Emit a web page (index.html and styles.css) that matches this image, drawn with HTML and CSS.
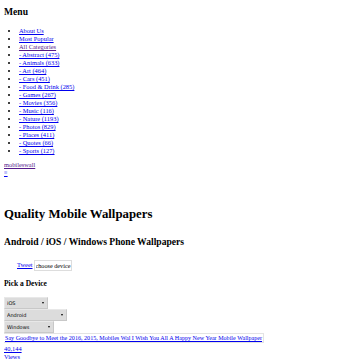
FILE: index.html
```html
<!DOCTYPE html>
<html lang="en">
<head>
<meta charset="UTF-8">
<meta name="viewport" content="width=device-width, initial-scale=1.0">
<title>mobileswall</title>
<link rel="stylesheet" href="styles.css">
</head>
<body>
<div class="menu">
  <h2 class="menu-title">Menu</h2>
  <ul class="menu-list">
    <li><a href="#">About Us</a></li>
    <li><a href="#">Most Popular</a></li>
    <li><a href="#" class="visited">All Categories</a></li>
    <li><a href="#">- Abstract (475)</a></li>
    <li><a href="#">- Animals (633)</a></li>
    <li><a href="#">- Art (464)</a></li>
    <li><a href="#">- Cars (451)</a></li>
    <li><a href="#">- Food &amp; Drink (285)</a></li>
    <li><a href="#">- Games (267)</a></li>
    <li><a href="#">- Movies (356)</a></li>
    <li><a href="#">- Music (116)</a></li>
    <li><a href="#">- Nature (1193)</a></li>
    <li><a href="#">- Photos (829)</a></li>
    <li><a href="#">- Places (411)</a></li>
    <li><a href="#">- Quotes (66)</a></li>
    <li><a href="#">- Sports (127)</a></li>
  </ul>
</div>

<div class="header">
  <a href="#" class="logo visited">mobileswall</a>
  <a href="#" class="menu-toggle">&equiv;</a>
</div>

<h1 class="page-title">Quality Mobile Wallpapers</h1>
<h2 class="page-subtitle">Android / iOS / Windows Phone Wallpapers</h2>

<div class="share">
  <a href="#">Tweet</a><input type="text" class="device-input" value="choose device">
</div>

<h3 class="pick-title">Pick a Device</h3>
<div class="devices">
  <label class="device-select ios"><select><option>iOS</option></select></label>
  <label class="device-select android"><select><option>Android</option></select></label>
  <label class="device-select windows"><select><option>Windows</option></select></label>
</div>

<a href="#" class="wall-link">Say Goodbye to Meet the 2016, 2015, Mobiles Wal I Wish You All A Happy New Year Mobile Wallpaper</a>
<a href="#" class="views">40,144<br>Views</a>
</body>
</html>
```

FILE: styles.css
```css
body {
  margin: 0 4px;
  font-family: "Liberation Serif", serif;
  font-size: 6.4px;
  line-height: 8px;
  color: #000;
}

a {
  color: #0000ee;
}

a.visited {
  color: #551a8b;
}

.menu-title {
  font-size: 9.6px;
  line-height: 11px;
  margin: 6px 0 0;
}

.menu-list {
  margin: 10px 0 0;
  padding-left: 15px;
}

.menu-list li::marker {
  font-size: 8px;
}

.header {
  margin-top: 6px;
  display: flex;
  flex-direction: column;
  align-items: flex-start;
}

.page-title {
  font-size: 12.8px;
  line-height: 15px;
  margin: 30px 0 0;
}

.page-subtitle {
  font-size: 9.6px;
  line-height: 11px;
  margin: 14px 0 0;
}

.share {
  margin-top: 12px;
  padding-left: 13px;
  display: flex;
  align-items: center;
  height: 12px;
}

.device-input {
  font-family: "Liberation Serif", serif;
  font-size: 6.2px;
  width: 38px;
  height: 11px;
  padding: 0 0 0 1px;
  margin: 0 0 0 1px;
  border: 1px solid #ddd;
  box-sizing: border-box;
  color: #000;
}

.pick-title {
  font-size: 7.5px;
  line-height: 9px;
  margin: 8px 0 0;
}

.devices {
  margin-top: 9px;
  display: flex;
  flex-direction: column;
  align-items: flex-start;
}

.device-select {
  position: relative;
  display: block;
  height: 12px;
}

.device-select select {
  appearance: none;
  width: 100%;
  height: 12px;
  margin: 0;
  padding: 0 0 0 2px;
  font-family: "DejaVu Sans", sans-serif;
  font-size: 5px;
  border: 1px solid #e8e8e8;
  border-right-color: #c8c8c8;
  border-bottom-color: #c8c8c8;
  border-radius: 0;
  background-color: #dcdcdc;
  color: #000;
  box-sizing: border-box;
}

.device-select::after {
  content: "";
  position: absolute;
  right: 4px;
  top: 5px;
  border-left: 1.5px solid transparent;
  border-right: 1.5px solid transparent;
  border-top: 2px solid #000;
}

.ios { width: 44px; }
.android { width: 63px; }
.windows { width: 50px; }

.wall-link {
  display: inline-block;
  margin-left: -1px;
  padding: 0 1px;
  font-size: 6.1px;
  border: 1px solid #e3e3e3;
  line-height: 8px;
}

.views {
  display: block;
  margin-top: 2px;
  line-height: 7.5px;
}
```
